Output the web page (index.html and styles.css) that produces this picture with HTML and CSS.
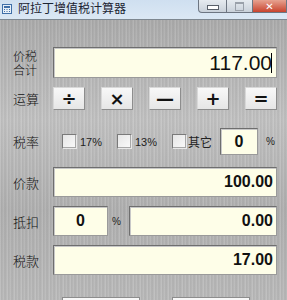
FILE: index.html
```html
<!DOCTYPE html>
<html lang="zh-CN">
<head>
    <meta charset="UTF-8">
    <title>阿拉丁增值税计算器</title>
    <link rel="stylesheet" href="styles.css">
</head>
<body>
    <div class="window">
        <div class="titlebar">
            <svg class="app-icon" width="10" height="10" viewBox="0 0 10 10">
                <rect x="0.5" y="0.5" width="9" height="9" fill="#e8f0f8" stroke="#3f6fa8"/>
                <rect x="2" y="2" width="6" height="2" fill="#3f6fa8"/>
                <rect x="2" y="5" width="1" height="1" fill="#3f6fa8"/>
                <rect x="4.5" y="5" width="1" height="1" fill="#3f6fa8"/>
                <rect x="7" y="5" width="1" height="1" fill="#3f6fa8"/>
                <rect x="2" y="7" width="1" height="1" fill="#3f6fa8"/>
                <rect x="4.5" y="7" width="1" height="1" fill="#3f6fa8"/>
                <rect x="7" y="7" width="1" height="1" fill="#3f6fa8"/>
            </svg>
            <span class="title">阿拉丁增值税计算器</span>
            <div class="win-btns">
                <span class="wb wb-min"><i></i></span>
                <span class="wb wb-max"><i></i></span>
                <span class="wb wb-close">✕</span>
            </div>
        </div>

        <div class="panel">
            <div class="row row-total">
                <div class="label two-line"><span>价税</span><span>合计</span></div>
                <div class="field big">117.00<span class="caret"></span></div>
            </div>

            <div class="row row-ops">
                <div class="label">运算</div>
                <div class="ops">
                    <button class="op">÷</button>
                    <button class="op">×</button>
                    <button class="op">—</button>
                    <button class="op">+</button>
                    <button class="op">=</button>
                </div>
            </div>

            <div class="row row-rate">
                <div class="label">税率</div>
                <div class="rates">
                    <span class="check"></span><span class="rate-text">17%</span>
                    <span class="check"></span><span class="rate-text">13%</span>
                    <span class="check"></span><span class="rate-text cn">其它</span>
                    <div class="field small">0</div>
                    <span class="pct">%</span>
                </div>
            </div>

            <div class="row row-val">
                <div class="label">价款</div>
                <div class="field">100.00</div>
            </div>

            <div class="row row-val">
                <div class="label">抵扣</div>
                <div class="field short">0</div>
                <span class="pct pct-mid">%</span>
                <div class="field">0.00</div>
            </div>

            <div class="row row-val">
                <div class="label">税款</div>
                <div class="field">17.00</div>
            </div>

            <div class="bottom">
                <button class="bbtn">计算</button>
                <button class="bbtn">清空</button>
            </div>
        </div>
    </div>
</body>
</html>
```

FILE: styles.css
```css
body {
    margin: 0;
    font-family: "Noto Sans CJK SC", "Liberation Sans", sans-serif;
    overflow: hidden;
}
.window {
    width: 287px;
    height: 300px;
    overflow: hidden;
    background-color: #b6b6b6;
    background-image:
        repeating-linear-gradient(90deg, rgba(255,255,255,0.2) 0px, rgba(255,255,255,0) 1px, rgba(0,0,0,0.08) 2px, rgba(255,255,255,0.12) 3px, rgba(0,0,0,0.06) 5px, rgba(255,255,255,0.05) 7px),
        linear-gradient(#a7a7a7, #c2c2c2 40%, #b0b0b0 70%, #bababa);
}
.titlebar {
    height: 19px;
    display: flex;
    align-items: flex-start;
    background: linear-gradient(#cfdff0, #dbe8f4);
    border-bottom: 1px solid #7d8790;
    position: relative;
}
.app-icon {
    margin: 4px 0 0 2px;
}
.title {
    margin-left: 6px;
    font-size: 12px;
    line-height: 16px;
    color: #1c2433;
}
.win-btns {
    position: absolute;
    right: 0;
    top: 0;
    display: flex;
}
.wb {
    height: 12px;
    border: 1px solid #6d7682;
    border-top: none;
    display: flex;
    align-items: center;
    justify-content: center;
}
.wb-min {
    width: 27px;
    border-radius: 0 0 0 4px;
    background: linear-gradient(#e6ebf0, #c9d1da);
}
.wb-min i {
    width: 10px;
    height: 3px;
    margin-top: 3px;
    background: #fff;
    border: 1px solid #59606a;
}
.wb-max {
    width: 25px;
    border-left: none;
    background: linear-gradient(#e6ebf0, #c9d1da);
}
.wb-max i {
    width: 7px;
    height: 6px;
    border: 1px solid #9aa1aa;
    border-top-width: 2px;
}
.wb-close {
    width: 33px;
    border-left: none;
    background: linear-gradient(#e7a290, #c9442e);
    color: #fff;
    font-size: 10px;
    font-weight: bold;
    font-family: "DejaVu Sans", sans-serif;
}
.panel {
    padding: 27px 10px 0 13px;
}
.row {
    display: flex;
    align-items: center;
}
.label {
    width: 40px;
    flex: none;
    font-size: 13px;
    font-weight: 300;
    line-height: 15px;
    color: #111;
}
.two-line {
    display: flex;
    flex-direction: column;
    font-size: 12px;
    line-height: 14px;
}
.field {
    flex: 1;
    height: 28px;
    box-sizing: border-box;
    background: #fefee8;
    border: 1px solid #9a9a9a;
    border-top-color: #6e6e6e;
    border-left-color: #6e6e6e;
    box-shadow: inset 1px 1px 0 #c8c8c8;
    font-family: "Liberation Sans", sans-serif;
    font-weight: bold;
    font-size: 16px;
    line-height: 26px;
    text-align: right;
    padding-right: 3px;
    color: #111;
}
.field.big {
    height: 31px;
    font-weight: normal;
    font-size: 21px;
    line-height: 29px;
    padding-right: 4px;
    display: flex;
    justify-content: flex-end;
    align-items: center;
}
.caret {
    width: 1px;
    height: 20px;
    background: #000;
    margin-left: -1px;
}
.row-ops {
    margin-top: 9px;
}
.ops {
    flex: 1;
    display: flex;
    justify-content: space-between;
}
.op {
    width: 32px;
    height: 23px;
    padding: 0;
    background: linear-gradient(#f8f8f8, #e6e6e6);
    border: 1px solid #8d8d8d;
    border-top-color: #d8d8d8;
    border-left-color: #d8d8d8;
    font-family: "DejaVu Sans", sans-serif;
    font-size: 18px;
    font-weight: bold;
    line-height: 20px;
    color: #111;
}
.row-rate {
    margin-top: 18px;
}
.rates {
    flex: 1;
    display: flex;
    align-items: center;
}
.check {
    width: 15px;
    height: 15px;
    box-sizing: border-box;
    margin-left: 9px;
    background: linear-gradient(135deg, #e6e6e6, #fafafa);
    border: 1px solid #7a7a7a;
    border-right-color: #e8e8e8;
    border-bottom-color: #e8e8e8;
    box-shadow: inset -1px -1px 0 #a8a8a8;
}
.rate-text {
    margin-left: 3px;
    width: 30px;
    font-family: "Liberation Sans", sans-serif;
    font-size: 11px;
    color: #222;
}
.rate-text + .check {
    margin-left: 7px;
}
.rate-text.cn {
    font-family: "Noto Sans CJK SC", sans-serif;
    font-size: 12px;
    margin-left: 1px;
    width: 32px;
}
.field.small {
    flex: none;
    width: 38px;
    height: 27px;
    text-align: center;
    padding: 0;
}
.pct {
    margin-left: 8px;
    font-family: "Liberation Sans", sans-serif;
    font-size: 10px;
    color: #222;
}
.row-val {
    margin-top: 9px;
}
.row-rate + .row-val {
    margin-top: 12px;
}
.row-val .field {
    height: 30px;
    line-height: 28px;
}
.field.short {
    flex: none;
    width: 55px;
    text-align: center;
    padding: 0;
}
.pct-mid {
    margin: 0 8px 0 4px;
}
.bottom {
    margin-top: 22px;
    display: flex;
    padding-left: 49px;
    gap: 32px;
}
.bbtn {
    width: 78px;
    height: 24px;
    background: linear-gradient(#f8f8f8, #e6e6e6);
    border: 1px solid #8d8d8d;
    font-size: 13px;
}
```
